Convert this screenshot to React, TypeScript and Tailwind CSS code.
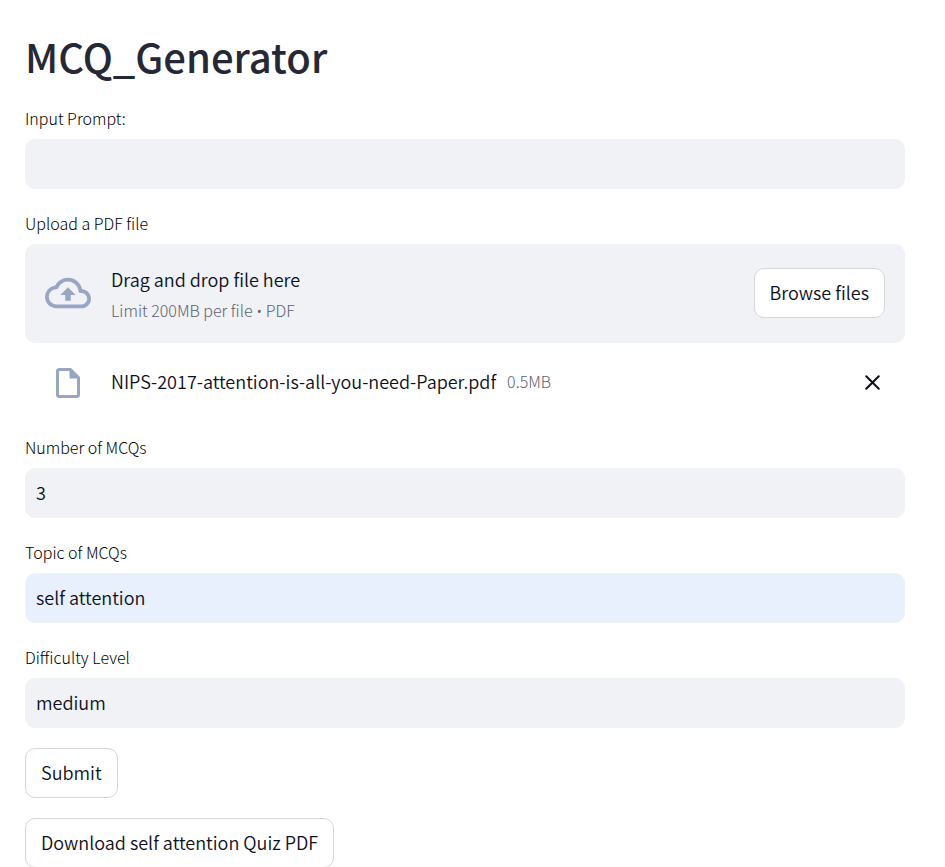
import { useState, type ReactNode } from "react";

const icon = "fill-[#98a6c6]";

function Label({ htmlFor, children }: { htmlFor: string; children: ReactNode }) {
  return (
    <label htmlFor={htmlFor} className="mb-[7px] flex h-7 items-center text-[16px] leading-6 font-light text-black">
      {children}
    </label>
  );
}

function TextField({
  id,
  label,
  initial = "",
  filled = false,
}: {
  id: string;
  label: string;
  initial?: string;
  filled?: boolean;
}) {
  const [value, setValue] = useState(initial);
  return (
    <div>
      <Label htmlFor={id}>{label}</Label>
      <input
        id={id}
        type="text"
        value={value}
        onChange={(e) => setValue(e.target.value)}
        className={`block h-[50px] w-full rounded-[10px] border border-[#f0f2f6] px-[10px] pb-[2px] text-[18px] outline-none focus:border-[#ff4b4b] ${
          filled ? "bg-[#e8f0fe]" : "bg-[#f0f2f6]"
        }`}
      />
    </div>
  );
}

function Button({ children, type = "button" }: { children: ReactNode; type?: "button" | "submit" }) {
  return (
    <button
      type={type}
      className="flex h-[50px] items-center rounded-[10px] border border-[#d6d6d9] bg-white px-[15px] pb-px text-[18px] whitespace-nowrap"
    >
      {children}
    </button>
  );
}

function Uploader() {
  const [file, setFile] = useState<string | null>("NIPS-2017-attention-is-all-you-need-Paper.pdf");
  return (
    <div>
      <Label htmlFor="pdf">Upload a PDF file</Label>
      <input
        id="pdf"
        type="file"
        accept=".pdf"
        className="hidden"
        onChange={(e) => setFile(e.target.files?.[0]?.name ?? null)}
      />
      <section className="flex items-center rounded-[10px] bg-[#f0f2f6] px-5 pt-[19px] pb-[21px]">
        <svg viewBox="0 0 24 24" className={`mr-5 size-[46px] shrink-0 ${icon}`} aria-hidden="true">
          <path d="M19.35 10.04A7.49 7.49 0 0012 4C9.11 4 6.6 5.64 5.35 8.04A5.994 5.994 0 000 14c0 3.31 2.69 6 6 6h13c2.76 0 5-2.24 5-5 0-2.64-2.05-4.78-4.65-4.96zM19 18H6c-2.21 0-4-1.79-4-4 0-2.05 1.53-3.76 3.56-3.97l1.07-.11.5-.95A5.469 5.469 0 0112 6c2.62 0 4.88 1.86 5.39 4.43l.3 1.5 1.53.11A2.98 2.98 0 0122 15c0 1.65-1.35 3-3 3zM8 13h2.55v3h2.9v-3H16l-4-4z" />
        </svg>
        <div className="min-w-0 flex-1 pt-px">
          <div className="mb-1 text-[18px] leading-[30px]">Drag and drop file here</div>
          <div className="text-[16px] leading-6 font-light text-[#5e616f]">
            Limit 200MB per file <span className="font-['Noto_Sans'] leading-none">•</span> PDF
          </div>
        </div>
        <Button>Browse files</Button>
      </section>
      {file && (
        <div className="flex items-center px-5 pt-[27px] pb-[18px]">
          <div className="mr-5 flex h-5 w-[46px] shrink-0 items-center justify-center">
            <svg viewBox="0 0 24 24" className={`size-9 shrink-0 ${icon}`} aria-hidden="true">
              <path d="M14 2H6c-1.1 0-1.99.9-1.99 2L4 20c0 1.1.89 2 1.99 2H18c1.1 0 2-.9 2-2V8l-6-6zM6 20V4h7v5h5v11H6z" />
            </svg>
          </div>
          <div className="flex min-w-0 flex-1 items-center gap-[11px] pb-[2px] leading-[23px]">
            <span className="min-w-0 text-[18px] break-words">{file}</span>
            <small className="text-[16px] font-light text-[#5e616f]">0.5MB</small>
          </div>
          <button type="button" aria-label="Remove file" onClick={() => setFile(null)} className="p-0">
            <svg viewBox="0 0 24 24" className="size-[25px]" fill="none" stroke="currentColor" strokeWidth="2" strokeLinecap="round" aria-hidden="true">
              <path d="M6 6l12 12M18 6L6 18" />
            </svg>
          </button>
        </div>
      )}
    </div>
  );
}

export default function App() {
  return (
    <main className="bg-white pt-[23px] pr-10 pl-[25px] font-['Noto_Sans_CJK_SC','Noto_Sans',sans-serif] font-[350] text-[#0e101c]">
      <h1 className="mb-[15px] text-[40px] leading-[66px] font-medium text-[#262935]">MCQ_Generator</h1>
      <form className="flex flex-col items-start gap-5 [&>div]:w-full" onSubmit={(e) => e.preventDefault()}>
        <TextField id="prompt" label="Input Prompt:" />
        <Uploader />
        <TextField id="count" label="Number of MCQs" initial="3" />
        <TextField id="topic" label="Topic of MCQs" initial="self attention" filled />
        <TextField id="level" label="Difficulty Level" initial="medium" />
        <Button type="submit">Submit</Button>
        <Button>Download self attention Quiz PDF</Button>
      </form>
    </main>
  );
}
